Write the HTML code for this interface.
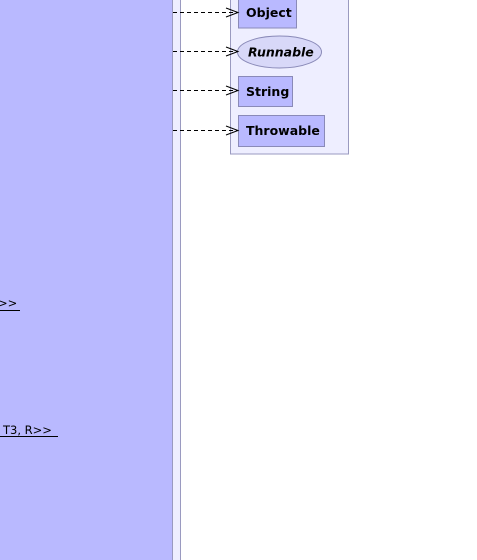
<!DOCTYPE html>
<html><head><style>
body{margin:0;width:477px;height:560px;overflow:hidden;background:#fff}
svg{display:block}
text{font-family:"DejaVu Sans","Liberation Sans",sans-serif;font-size:12.5px;font-weight:bold;fill:#000}
</style></head><body>
<svg width="477" height="560" viewBox="0 0 477 560">
<rect x="0" y="0" width="172" height="560" fill="#b9b9ff"/>
<rect x="172.5" y="-5" width="8" height="570" fill="#eeeeff" stroke="#9a9ac0" stroke-width="1"/>
<rect x="230.5" y="-5" width="118" height="159" fill="#eeeeff" stroke="#9a9ac0" stroke-width="1"/>
<rect x="238.5" y="-5" width="58" height="33" fill="#b9b9ff" stroke="#8a8ab8"/>
<text x="246" y="17">Object</text>
<ellipse cx="279.5" cy="52" rx="42" ry="16" fill="#d8d8f8" stroke="#8a8ab8"/>
<text x="248" y="56.5" font-style="italic">Runnable</text>
<rect x="238.5" y="76.5" width="54" height="30" fill="#b9b9ff" stroke="#8a8ab8"/>
<text x="246" y="96">String</text>
<rect x="238.5" y="115.5" width="86" height="31" fill="#b9b9ff" stroke="#8a8ab8"/>
<text x="246" y="135">Throwable</text>
<g stroke="#000" stroke-width="1" fill="none">
<path d="M173 12.5H237" stroke-dasharray="4,3"/><path d="M226 8l12 4.5l-12 4.5"/>
<path d="M173 51.5H237" stroke-dasharray="4,3"/><path d="M226 47l12 4.5l-12 4.5"/>
<path d="M173 90.5H237" stroke-dasharray="4,3"/><path d="M226 86l12 4.5l-12 4.5"/>
<path d="M173 130.5H237" stroke-dasharray="4,3"/><path d="M226 126l12 4.5l-12 4.5"/>
</g>
<text x="-2" y="307" style="font-weight:normal;font-size:11.5px">&gt;&gt;</text>
<path d="M0 310.5H20" stroke="#000"/>
<text x="3" y="434" style="font-weight:normal;font-size:11.5px">T3, R&gt;&gt;</text>
<path d="M0 436.5H58" stroke="#000"/>
</svg>
</body></html>
